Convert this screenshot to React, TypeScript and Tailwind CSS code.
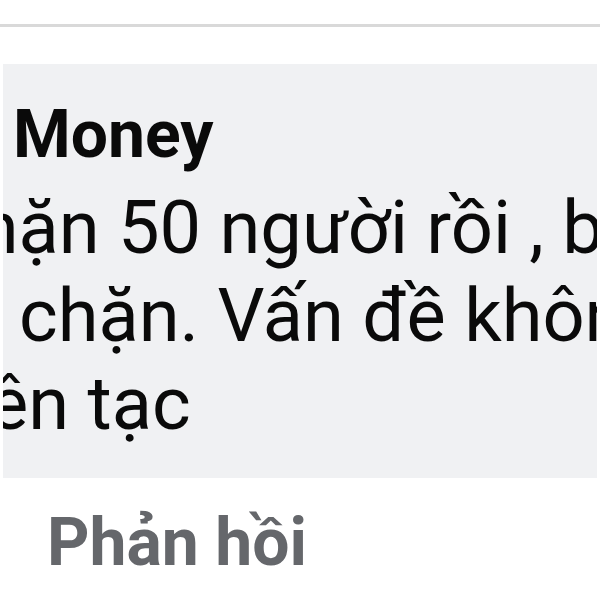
export default function App() {
  return (
    <div className="relative h-[600px] w-[600px] overflow-hidden bg-white font-['Roboto',sans-serif]">
      <div className="h-[24px]" />
      <div className="h-[3px] bg-[#d9d9d9]" />
      <div className="h-[37px]" />

      <div className="mx-[3px] h-[414px] overflow-hidden bg-[#f0f1f3] pt-[38px]">
        <div className="whitespace-nowrap pl-[10px] text-[66px] leading-none font-bold text-[#0a0a0a]">
          Money
        </div>
        <div className="mt-[16px] -ml-[3px] text-[74px] leading-[88px] text-[#0a0a0a]">
          <div className="-ml-[61px] whitespace-nowrap">chặn 50 người rồi , bị</div>
          <div className="-ml-[59px] whitespace-nowrap">bị chặn. Vấn đề không</div>
          <div className="-ml-[123px] whitespace-nowrap">xuyên tạc</div>
        </div>
      </div>

      <div className="mt-[32px] whitespace-nowrap pl-[47px] text-[66px] leading-none font-bold text-[#65676b]">
        Phản hồi
      </div>
    </div>
  )
}
